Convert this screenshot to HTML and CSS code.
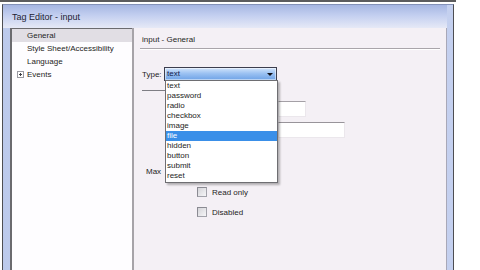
FILE: index.html
```html
<!DOCTYPE html>
<html>
<head>
<meta charset="utf-8">
<link rel="stylesheet" href="styles.css">
</head>
<body>
<div class="topline"></div>
<div class="window">
  <div class="titlebar">Tag Editor - input</div>
  <div class="client">
    <ul class="tree">
      <li class="sel">General</li>
      <li>Style Sheet/Accessibility</li>
      <li>Language</li>
      <li><span class="plus"></span>Events</li>
    </ul>
    <div class="sep"></div>
    <div class="panel">
      <div class="heading">input - General</div>
      <div class="rule"></div>
      <div class="typerow">
        <span class="lbl">Type:</span>
        <div class="select">
          <span class="seltext">text</span>
          <span class="arrow"></span>
          <ul class="dropdown">
            <li>text</li>
            <li>password</li>
            <li>radio</li>
            <li>checkbox</li>
            <li>image</li>
            <li class="hi">file</li>
            <li>hidden</li>
            <li>button</li>
            <li>submit</li>
            <li>reset</li>
          </ul>
        </div>
      </div>
      <div class="stub"></div>
      <div class="field f1"></div>
      <div class="field f2"></div>
      <div class="maxlbl">Max</div>
      <div class="check c1"><span class="box"></span><span>Read only</span></div>
      <div class="check c2"><span class="box"></span><span>Disabled</span></div>
    </div>
  </div>
</div>
<svg class="cursor" width="11" height="16" viewBox="0 0 11 16">
  <path d="M0.5 0.5 L0.5 13 L3.4 10.3 L5.6 15 L7.6 14.1 L5.5 9.6 L9.3 9.6 Z" fill="#fff" stroke="#000" stroke-width="0.9" stroke-linejoin="round"/>
</svg>
</body>
</html>
```
FILE: styles.css
```css
html, body {
  margin: 0;
  padding: 0;
  background: #fff;
  width: 480px;
  height: 270px;
  overflow: hidden;
  position: relative;
  font-family: "Liberation Sans", Arial, sans-serif;
  font-size: 8px;
  color: #1e1e24;
}
.topline {
  height: 2px;
  width: 456px;
  background: #5c5c5e;
}
.window {
  box-sizing: border-box;
  margin: 2px 0 0 2px;
  width: 452px;
  height: 266px;
  border-left: 1px solid #4e4e52;
  border-right: 1px solid #4e4e52;
  border-top: 1px solid #8492b8;
  background: linear-gradient(90deg, #bccaec, #d2dbf3 50%, #c4d0ef);
}
.titlebar {
  height: 23px;
  line-height: 24px;
  padding-left: 9px;
  margin-right: 6px;
  font-size: 9px;
  color: #1c2232;
  background: linear-gradient(180deg, #a6b6e2 0%, #c3cff0 45%, #e6e9f6 100%);
}
.client {
  display: flex;
  height: 242px;
  padding-left: 7px;
  padding-right: 6px;
}
.tree {
  box-sizing: border-box;
  width: 122px;
  margin: 0;
  padding: 0;
  list-style: none;
  background: #fefdff;
  border-left: 2px solid #6b6b6f;
  border-top: 1px solid #6b6b6f;
}
.tree li {
  height: 13px;
  line-height: 13px;
  padding-left: 15px;
  white-space: nowrap;
}
.tree li.sel {
  background: #e1dee4;
}
.plus {
  display: inline-block;
  box-sizing: border-box;
  width: 7px;
  height: 7px;
  margin-left: -10px;
  margin-right: 3px;
  vertical-align: -1px;
  border: 1px solid #9a9aa2;
  background:
    linear-gradient(#404048, #404048) center / 3px 1px no-repeat,
    linear-gradient(#404048, #404048) center / 1px 3px no-repeat,
    #fff;
}
.sep {
  width: 2px;
  background: #a6a3a8;
}
.panel {
  flex: 1;
  box-sizing: border-box;
  background: #f4f0f5;
  border-right: 1px solid #a8a8b8;
  padding-left: 8px;
  position: relative;
}
.heading {
  margin-top: 7px;
  height: 10px;
  line-height: 10px;
}
.rule {
  margin-top: 3px;
  margin-left: -2px;
  width: 300px;
  height: 1px;
  background: #a9a5aa;
  border-bottom: 1px solid #fff;
}
.typerow {
  margin-top: 17px;
  display: flex;
  align-items: center;
  height: 14px;
}
.lbl {
  width: 22px;
}
.select {
  position: relative;
  box-sizing: border-box;
  width: 113px;
  height: 14px;
  border: 1px solid #3c3e4e;
  background: linear-gradient(180deg, #d2e4fb 0%, #9cc2f2 45%, #6ea2e6 100%);
  box-shadow: inset 0 0 0 1px rgba(255,255,255,0.5);
}
.seltext {
  position: absolute;
  left: 2px;
  top: 0;
  line-height: 12px;
  color: #14204a;
}
.arrow {
  position: absolute;
  right: 3px;
  top: 5px;
  width: 0;
  height: 0;
  border-left: 3px solid transparent;
  border-right: 3px solid transparent;
  border-top: 3px solid #101018;
}
.dropdown {
  position: absolute;
  top: 12px;
  left: 0;
  width: 113px;
  box-sizing: border-box;
  margin: 0;
  padding: 0 0 1px 0;
  list-style: none;
  background: #fff;
  border: 1px solid #6e6e72;
  box-shadow: 2px 2px 2px rgba(0,0,0,0.28);
  z-index: 2;
}
.dropdown li {
  height: 10px;
  line-height: 10px;
  padding-left: 1px;
  color: #1e1e24;
}
.dropdown li.hi {
  background: #3a8fe8;
  color: #fff;
}
.stub {
  margin-top: 9px;
  width: 135px;
  height: 1px;
  background: #7e7e84;
}
.field {
  box-sizing: border-box;
  margin-left: 136px;
  height: 16px;
  background: #fff;
  border: 1px solid #ebe7ec;
  border-top-color: #a4a0a6;
}
.f1 {
  margin-top: 10px;
  width: 28px;
}
.f2 {
  margin-top: 5px;
  width: 67px;
  border-top-color: #98949a;
}
.maxlbl {
  margin-top: 29px;
  padding-left: 4px;
  height: 10px;
  line-height: 10px;
}
.check {
  display: flex;
  align-items: center;
  height: 10px;
  margin-left: 55px;
}
.c1 { margin-top: 10px; }
.c2 { margin-top: 10px; }
.box {
  box-sizing: border-box;
  width: 10px;
  height: 10px;
  margin-right: 5px;
  border: 1px solid #a2a2aa;
  border-top-color: #8a8a92;
  border-left-color: #8a8a92;
  background: linear-gradient(135deg, #d4d4d8, #f6f6f8);
}
.cursor {
  position: absolute;
  left: 211px;
  top: 138px;
}
```
